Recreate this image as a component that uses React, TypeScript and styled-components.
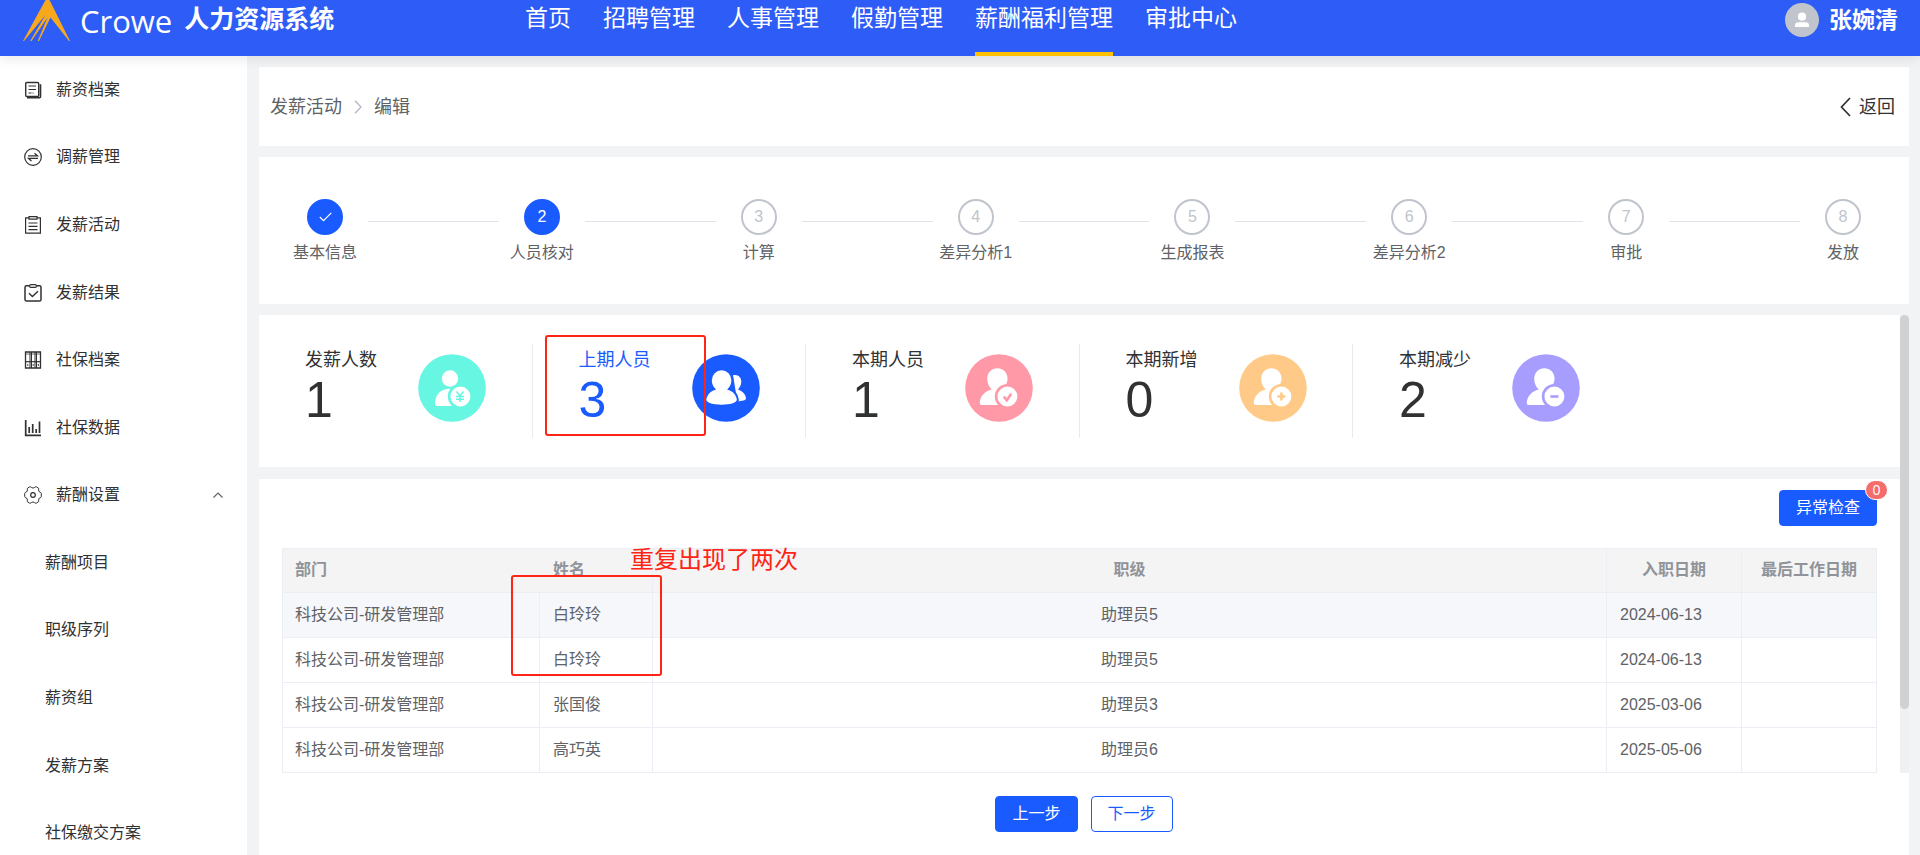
import React from "react";
import styled, { createGlobalStyle, css } from "styled-components";

const BLUE = "#1a5bff";
const RED = "#ff2414";

const GlobalStyle = createGlobalStyle`
  *, *::before, *::after { box-sizing: border-box; }
  body {
    margin: 0;
    background: #f1f3f5;
    color: #303133;
    font: 16px/24px "Liberation Sans", "Noto Sans CJK SC", sans-serif;
  }
  button { font: inherit; cursor: pointer; }
  a { color: inherit; text-decoration: none; }
  ul, ol { list-style: none; margin: 0; padding: 0; }
`;

const Shell = styled.div`
  display: flex;
  flex-direction: column;
  height: 100vh;
  overflow: hidden;
`;

const Header = styled.header`
  position: relative;
  z-index: 2;
  flex: none;
  display: grid;
  grid-template-columns: 525px 1fr auto;
  height: 56px;
  background: #2e5cf6;
  color: #fff;
  box-shadow: 0 2px 12px rgba(0, 0, 0, 0.1);
`;

const Brand = styled.div`
  display: flex;
  height: 40px;
  padding-left: 22px;
`;

const BrandMark = styled.svg`
  flex: none;
  width: 50px;
  height: 42px;
`;

const BrandName = styled.span`
  margin-left: 8px;
  font: 400 31px/42px "Open Sans", sans-serif;
`;

const SystemName = styled.h1`
  margin: 0 0 0 12px;
  font-size: 25px;
  line-height: 38px;
  font-weight: 700;
`;

const TopNav = styled.nav`
  display: flex;
  gap: 32px;
`;

const TopLink = styled.a<{ $active?: boolean }>`
  height: 56px;
  font-size: 23px;
  line-height: 36px;
  white-space: nowrap;
  border-bottom: 4px solid ${(p) => (p.$active ? "#ffc000" : "transparent")};
`;

const UserBox = styled.div`
  display: flex;
  gap: 10px;
  height: 40px;
  align-items: center;
  padding-right: 22px;
  font-size: 23px;
  font-weight: 700;
`;

const Body = styled.div`
  flex: 1;
  min-height: 0;
  display: flex;
`;

const Sidebar = styled.aside`
  flex: none;
  width: 247px;
  background: #fff;
  overflow: hidden;
`;

const Menu = styled.ul`
  display: grid;
  grid-auto-rows: 1fr;
  height: 811px;
`;

const MenuLink = styled.a<{ $sub?: boolean }>`
  display: flex;
  align-items: center;
  gap: 14px;
  height: 100%;
  padding: 0 24px 0 ${(p) => (p.$sub ? 45 : 24)}px;
`;

const MenuIcon = styled.svg`
  flex: none;
  width: 18px;
  height: 18px;
  fill: none;
  stroke: #303133;
  stroke-width: 1.2;
`;

const MenuArrow = styled.svg`
  margin-left: auto;
  width: 10px;
  height: 6px;
  fill: none;
  stroke: #606266;
  stroke-width: 1.2;
`;

const Main = styled.main`
  flex: 1;
  min-width: 0;
  display: flex;
  flex-direction: column;
  padding: 11px 11px 0 12px;
`;

const Crumbs = styled.section`
  flex: none;
  display: flex;
  align-items: center;
  justify-content: space-between;
  height: 79px;
  padding: 0 14px 0 11px;
  margin-bottom: 11px;
  background: #fff;
  font-size: 18px;
`;

const CrumbTrail = styled.nav`
  display: flex;
  align-items: center;
  gap: 12px;
  color: #606266;
`;

const BackButton = styled.button`
  display: flex;
  align-items: center;
  gap: 8px;
  padding: 0;
  border: 0;
  background: none;
  color: #303133;
`;

const Steps = styled.ol`
  flex: none;
  display: flex;
  padding: 42px 23px 39px;
  margin-bottom: 11px;
  background: #fff;
`;

const Step = styled.li`
  flex: none;
  width: 86px;
  display: flex;
  flex-direction: column;
  align-items: center;
  gap: 6px;
  color: #606266;
  white-space: nowrap;
`;

const StepLine = styled.li`
  flex: 1;
  height: 1px;
  margin-top: 22px;
  background: #e0e3e9;
`;

const StepDot = styled.span<{ $on?: boolean }>`
  display: flex;
  align-items: center;
  justify-content: center;
  width: 36px;
  height: 36px;
  border: 2px solid ${(p) => (p.$on ? BLUE : "#c0c4cc")};
  border-radius: 50%;
  background: ${(p) => (p.$on ? BLUE : "#fff")};
  color: ${(p) => (p.$on ? "#fff" : "#c0c4cc")};
`;

const ScrollRow = styled.div`
  flex: 1;
  min-height: 0;
  display: flex;
`;

const ScrollContent = styled.div`
  flex: 1;
  min-width: 0;
  display: flex;
  flex-direction: column;
  gap: 12px;
  overflow: hidden;
`;

const ScrollTrack = styled.div`
  flex: none;
  width: 9px;
  border-radius: 5px;
  background: #f0f0f0;
`;

const ScrollThumb = styled.div`
  height: 86%;
  border-radius: 5px;
  background: #d0d1d3;
`;

const Stats = styled.ul`
  flex: none;
  display: grid;
  grid-template-columns: repeat(6, 1fr);
  padding: 29px 0;
  background: #fff;
`;

const Stat = styled.li<{ $active?: boolean }>`
  position: relative;
  display: flex;
  height: 94px;
  padding-left: 46px;
  border-right: 1px solid #e8eaec;
  color: ${(p) => (p.$active ? BLUE : "#303133")};
  &:last-child { border-right: 0; }
`;

const StatText = styled.div`
  width: 113px;
  padding-top: 4px;
  font-size: 18px;
`;

const StatValue = styled.div`
  font-size: 50px;
  line-height: 56px;
`;

const StatIcon = styled.svg`
  flex: none;
  width: 68px;
  height: 68px;
  margin-top: 10px;
`;

const markFrame = css`
  position: absolute;
  border: 2px solid ${RED};
  border-radius: 3px;
  pointer-events: none;
`;

const StatMark = styled.div`
  ${markFrame}
  left: 12px;
  top: -9px;
  width: 161px;
  height: 101px;
`;

const TableCard = styled.section`
  flex: 1;
  padding: 11px 23px 0;
  background: #fff;
`;

const Toolbar = styled.div`
  display: flex;
  justify-content: flex-end;
  margin-bottom: 22px;
`;

const Button = styled.button<{ $plain?: boolean }>`
  position: relative;
  height: 36px;
  padding: 0 16px;
  border: 1px solid ${BLUE};
  border-radius: 4px;
  background: ${(p) => (p.$plain ? "#fff" : BLUE)};
  color: ${(p) => (p.$plain ? BLUE : "#fff")};
`;

const Badge = styled.sup`
  position: absolute;
  top: -11px;
  right: -12px;
  width: 23px;
  height: 20px;
  border: 1px solid #fff;
  border-radius: 10px;
  background: #f56c6c;
  color: #fff;
  font: 14px/17px "Open Sans", sans-serif;
  text-align: center;
`;

const TableWrap = styled.div`
  position: relative;
`;

const Table = styled.table`
  width: 100%;
  table-layout: fixed;
  border-collapse: separate;
  border-spacing: 0;
  border: solid #ebeef5;
  border-width: 1px 0 0 1px;
  color: #606266;
`;

const cell = css<{ $center?: boolean; $open?: boolean }>`
  padding: 0 13px;
  border: solid #ebeef5;
  border-width: 0 ${(p) => (p.$open ? 0 : 1)}px 1px 0;
  text-align: ${(p) => (p.$center ? "center" : "left")};
  white-space: nowrap;
  &:first-child { padding-left: 12px; }
`;

const Th = styled.th<{ $center?: boolean; $open?: boolean }>`
  ${cell}
  height: 44px;
  padding-bottom: 1px;
  background: #f4f4f4;
  color: #909399;
`;

const Td = styled.td<{ $center?: boolean; $open?: boolean }>`
  ${cell}
  height: 45px;
`;

const Tr = styled.tr<{ $hover?: boolean }>`
  background: ${(p) => (p.$hover ? "#f5f7fb" : "#fff")};
`;

const NameMark = styled.div`
  ${markFrame}
  left: 229px;
  top: 27px;
  width: 151px;
  height: 101px;
`;

const MarkNote = styled.p`
  position: absolute;
  left: 348px;
  top: 0;
  margin: 0;
  color: ${RED};
  font-size: 24px;
`;

const Footer = styled.footer`
  flex: none;
  display: flex;
  justify-content: center;
  gap: 13px;
  height: 82px;
  padding-top: 23px;
  background: #fff;
`;

const icons: Record<string, React.ReactNode> = {
  archive: (
    <>
      <rect x="1.700" y="1.500" width="13" height="14" rx="1.200" strokeWidth="1.400" />
      <path d="M16.500 3.200v12.600q0 1-1 1H3" strokeWidth="1.600" />
      <path d="M4.500 5h7.500M4.500 8.500h7.500M4.500 12h3M8.500 12h1" />
    </>
  ),
  swap: (
    <>
      <circle cx="9" cy="9" r="8.300" />
      <path d="M4 7.800h9.500L10.500 5.200M14 10.300H4.500l3 2.600" strokeWidth="1.300" />
    </>
  ),
  list: (
    <>
      <path d="M5 1.800H1.600v15.400h14.800V1.800H13" />
      <path d="M5 .7h8v2.400H5zM4.500 7h9M4.500 10.300h9M4.500 13.600h9" />
    </>
  ),
  check: (
    <>
      <path d="M5 1.800H2.500Q1 1.800 1 3.400v12Q1 17 2.500 17h13q1.500 0 1.500-1.600v-12q0-1.600-1.500-1.600H13" strokeWidth="1.500" />
      <rect x="5.500" y=".6" width="7" height="2.800" rx="1.400" />
      <path d="M5 9.200l3.400 3.400 5.600-5.400" strokeWidth="1.400" />
    </>
  ),
  binders: (
    <>
      <path d="M1.500 1h15v16h-15z" strokeWidth="1.300" />
      <path d="M6 1v16M7.500 1v16M11 1v16M12.500 1v16" strokeWidth="1" />
      <path d="M1.500 10.700h15" />
      <path d="M1.500 3h15" strokeWidth=".7" />
      <path d="M3.200 14h1.200M8.600 14h1.200M13.800 14h1.200" strokeWidth="1.400" />
    </>
  ),
  bars: (
    <path d="M1.700 1v15.300H17M5.200 14V8M8.700 14V5M12.200 14v-4M15.500 14V2.500" strokeWidth="1.700" />
  ),
  gear: (
    <>
      <path d="M5.600.9Q7.200.6 7.600 1.500q1.400 1.200 2.800 0Q10.800.6 12.400.9l1.900 1.100q.7.600.3 1.800-.2 2 1.700 2.500 1 .3 1 1.300v2.800q0 1-1 1.300-1.900.5-1.700 2.500.4 1.200-.3 1.800l-1.900 1.100q-1.600.3-2-.6-1.400-1.200-2.800 0-.4.900-2 .6L3.700 16q-.7-.6-.3-1.800.2-2-1.700-2.500-1-.3-1-1.300V7.600q0-1 1-1.300 1.900-.5 1.700-2.500Q3 2.600 3.700 2z" strokeWidth="1" />
      <circle cx="9" cy="9" r="2.300" />
    </>
  ),
};

const mainMenu = [
  { icon: "archive", label: "薪资档案" },
  { icon: "swap", label: "调薪管理" },
  { icon: "list", label: "发薪活动" },
  { icon: "check", label: "发薪结果" },
  { icon: "binders", label: "社保档案" },
  { icon: "bars", label: "社保数据" },
  { icon: "gear", label: "薪酬设置", open: true },
];
const subMenu = ["薪酬项目", "职级序列", "薪资组", "发薪方案", "社保缴交方案"];
const topMenu = ["首页", "招聘管理", "人事管理", "假勤管理", "薪酬福利管理", "审批中心"];
const steps = ["基本信息", "人员核对", "计算", "差异分析1", "生成报表", "差异分析2", "审批", "发放"];

type StatKind = "pay" | "group" | "check" | "plus" | "minus";
const stats: { label: string; value: number; color: string; kind: StatKind }[] = [
  { label: "发薪人数", value: 1, color: "#66f6e1", kind: "pay" },
  { label: "上期人员", value: 3, color: BLUE, kind: "group" },
  { label: "本期人员", value: 1, color: "#ff99a8", kind: "check" },
  { label: "本期新增", value: 0, color: "#ffca87", kind: "plus" },
  { label: "本期减少", value: 2, color: "#a79dff", kind: "minus" },
];

const rows = [
  ["科技公司-研发管理部", "白玲玲", "助理员5", "2024-06-13"],
  ["科技公司-研发管理部", "白玲玲", "助理员5", "2024-06-13"],
  ["科技公司-研发管理部", "张国俊", "助理员3", "2025-03-06"],
  ["科技公司-研发管理部", "高巧英", "助理员6", "2025-05-06"],
];

const signs: Record<string, string> = {
  pay: "M38.500 37.500l3.500 4.500 3.500-4.500M42 42v6M38 42.500h8M38 45.300h8",
  check: "M38.800 42.500l3 3.800 4.400-6.500",
  plus: "M42.400 38.500v8M38.400 42.500h8",
  minus: "M38.400 42.500h8",
};

function PersonIcon({ kind, color }: { kind: StatKind; color: string }) {
  return (
    <StatIcon viewBox="0 0 68 68" aria-hidden="true">
      <circle cx="34" cy="34" r="33.800" fill={color} />
      {kind === "group" && (
        <>
          <path d="M41 21.300c4.500-1.500 8.300 1.700 8.300 6.200 0 3.800-1.500 5.800-3.300 8 4.600 1.500 7.700 5 8 9-.5 1.800-3.700 2.700-8.700 2.700z" fill="#fff" />
          <path
            d="M29.600 16.200a9.800 10 0 0 1 9.800 10c0 4.300-2 7.200-4.300 9.300 5.500 1.500 9.200 5.300 9.800 10.500-1 2.800-6.600 4.700-15.300 4.700s-14.300-1.900-15.300-4.700c.6-5.200 4.300-9 9.800-10.500-2.300-2.100-4.300-5-4.300-9.300a9.800 10 0 0 1 9.800-10z"
            fill="#fff" stroke={color} strokeWidth="4" paintOrder="stroke"
          />
        </>
      )}
      {kind === "pay" && (
        <>
          <circle cx="32" cy="24.500" r="8.200" fill="#fff" />
          <path d="M19.500 52q-2.500 0-2.500-2.500C17 40 23 34.700 32 34.700q10 0 10 8V52z" fill="#fff" />
        </>
      )}
      {(kind === "check" || kind === "plus" || kind === "minus") && (
        <path
          d="M32.400 14.300c5.800 0 10.200 4.500 10.200 10.300 0 4-2 7.200-4.800 9.400L42 40v11H17q-2.400 0-2.300-2.500c.5-6.500 5.500-11.500 12-13-2.800-2.500-4.500-6.500-4.500-10.900 0-5.800 4.400-10.300 10.200-10.300z"
          fill="#fff"
        />
      )}
      {kind !== "group" && (
        <>
          <circle cx="42.400" cy="42.500" r="11.300" fill="#fff" stroke={color} strokeWidth="2.600" />
          <path d={signs[kind]} fill="none" stroke={color} strokeWidth={kind === "pay" ? 1.500 : 2.600} />
        </>
      )}
    </StatIcon>
  );
}

export default function App() {
  return (
    <Shell>
      <GlobalStyle />
      <Header>
        <Brand>
          <BrandMark viewBox="0 0 50 42" fill="#f8a81c" aria-hidden="true">
            <path d="M23.500 0h4L48 41h-1L28.500 17.500 17 41h-1.300l9.800-23.500L9.500 41H8.200l15.300-26L2 41H1z" />
          </BrandMark>
          <BrandName>Crowe</BrandName>
          <SystemName>人力资源系统</SystemName>
        </Brand>
        <TopNav>
          {topMenu.map((t) => (
            <TopLink key={t} href="#" $active={t === "薪酬福利管理"}>{t}</TopLink>
          ))}
        </TopNav>
        <UserBox>
          <svg width="34" height="34" viewBox="0 0 34 34" aria-hidden="true">
            <circle cx="17" cy="17" r="17" fill="#c0c4cc" />
            <circle cx="17" cy="13.700" r="4.100" fill="#fff" />
            <path d="M10 24v-1.500q0-3.300 3.500-3.300h7q3.500 0 3.500 3.300V24z" fill="#fff" />
          </svg>
          张婉清
        </UserBox>
      </Header>
      <Body>
        <Sidebar>
          <Menu>
            {mainMenu.map((m) => (
              <li key={m.label}>
                <MenuLink href="#">
                  <MenuIcon viewBox="0 0 18 18" aria-hidden="true">{icons[m.icon]}</MenuIcon>
                  {m.label}
                  {m.open && (
                    <MenuArrow viewBox="0 0 10 6" aria-hidden="true"><path d="M.5 5.500L5 1l4.500 4.500" /></MenuArrow>
                  )}
                </MenuLink>
              </li>
            ))}
            {subMenu.map((m) => (
              <li key={m}><MenuLink href="#" $sub>{m}</MenuLink></li>
            ))}
          </Menu>
        </Sidebar>
        <Main>
          <Crumbs>
            <CrumbTrail>
              <a href="#">发薪活动</a>
              <svg width="8" height="14" viewBox="0 0 8 14" fill="none" stroke="#b4b8c0" strokeWidth="1.300" aria-hidden="true">
                <path d="M1 .7L7 7l-6 6.300" />
              </svg>
              <span>编辑</span>
            </CrumbTrail>
            <BackButton type="button">
              <svg width="11" height="20" viewBox="0 0 11 20" fill="none" stroke="#303133" strokeWidth="1.700" aria-hidden="true">
                <path d="M10 1L1.500 10l8.500 9" />
              </svg>
              返回
            </BackButton>
          </Crumbs>
          <Steps>
            {steps.map((s, i) => (
              <React.Fragment key={s}>
                {i > 0 && <StepLine aria-hidden="true" />}
                <Step>
                  <StepDot $on={i < 2}>
                    {i === 0 ? (
                      <svg width="13" height="10" viewBox="0 0 13 10" fill="none" stroke="#fff" strokeWidth="1.200" aria-hidden="true">
                        <path d="M.8 5l3.700 3.700L12.300.8" />
                      </svg>
                    ) : i + 1}
                  </StepDot>
                  {s}
                </Step>
              </React.Fragment>
            ))}
          </Steps>
          <ScrollRow>
            <ScrollContent>
              <Stats>
                {stats.map((s) => (
                  <Stat key={s.label} $active={s.kind === "group"}>
                    <StatText>
                      {s.label}
                      <StatValue>{s.value}</StatValue>
                    </StatText>
                    <PersonIcon kind={s.kind} color={s.color} />
                    {s.kind === "group" && <StatMark />}
                  </Stat>
                ))}
              </Stats>
              <TableCard>
                <Toolbar>
                  <Button type="button">异常检查<Badge>0</Badge></Button>
                </Toolbar>
                <TableWrap>
                  <Table>
                    <colgroup>
                      <col width="257" />
                      <col width="113" />
                      <col />
                      <col width="135" />
                      <col width="135" />
                    </colgroup>
                    <thead>
                      <tr>
                        <Th $open>部门</Th>
                        <Th>姓名</Th>
                        <Th $center>职级</Th>
                        <Th $center>入职日期</Th>
                        <Th $center>最后工作日期</Th>
                      </tr>
                    </thead>
                    <tbody>
                      {rows.map((r, i) => (
                        <Tr key={i} $hover={i === 0}>
                          <Td>{r[0]}</Td>
                          <Td>{r[1]}</Td>
                          <Td $center>{r[2]}</Td>
                          <Td>{r[3]}</Td>
                          <Td />
                        </Tr>
                      ))}
                    </tbody>
                  </Table>
                  <NameMark />
                  <MarkNote>重复出现了两次</MarkNote>
                </TableWrap>
              </TableCard>
            </ScrollContent>
            <ScrollTrack><ScrollThumb /></ScrollTrack>
          </ScrollRow>
          <Footer>
            <Button type="button">上一步</Button>
            <Button type="button" $plain>下一步</Button>
          </Footer>
        </Main>
      </Body>
    </Shell>
  );
}
